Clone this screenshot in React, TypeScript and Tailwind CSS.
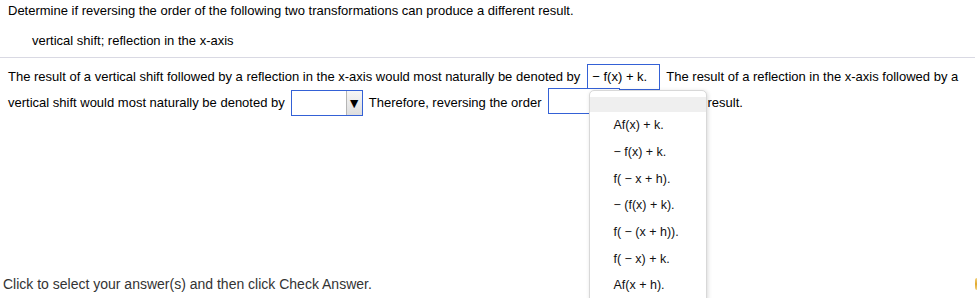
import React from 'react';

const choices = [
  'Af(x) + k.',
  '\u2212 f(x) + k.',
  'f( \u2212 x + h).',
  '\u2212 (f(x) + k).',
  'f( \u2212 (x + h)).',
  'f( \u2212 x) + k.',
  'Af(x + h).',
];

const AnswerBox: React.FC<{ children?: React.ReactNode; className?: string }> = ({ children, className }) => (
  <span className={`inline-flex h-[26px] items-center border border-[#3461d6] bg-white ${className ?? ''}`}>
    {children}
  </span>
);

const App: React.FC = () => {
  return (
    <div className="relative flex h-[298px] w-[977px] flex-col overflow-hidden bg-white font-['Liberation_Sans',Arial,sans-serif] text-[13px] leading-[16px] text-black">
      <div className="pl-2 pt-[3px]">
        Determine if reversing the order of the following two transformations can produce a different result.
      </div>
      <div className="pl-8 pt-[14px]">vertical shift; reflection in the x-axis</div>
      <div className="mt-[8px] h-px w-[975px] bg-[#d9d9e3]" />

      {/* question sentence with dropdown answers */}
      <div className="pl-2 pt-[6px]">
        <div className="flex h-[26px] items-center whitespace-nowrap">
          <span>The result of a vertical shift followed by a reflection in the x-axis would most naturally be denoted by</span>
          <AnswerBox className="ml-[7px] w-[73px] pl-[4px]">{'\u2212 f(x) + k.'}</AnswerBox>
          <span className="ml-[6px]">The result of a reflection in the x-axis followed by a</span>
        </div>
        <div className="flex h-[26px] items-center whitespace-nowrap">
          <span>vertical shift would most naturally be denoted by</span>
          <AnswerBox className="ml-[6px] w-[72px] justify-end">
            <span className="flex h-full w-[16px] items-center justify-center border-l border-[#b5b5b5] bg-gradient-to-b from-[#f6f6f6] to-[#dedede] text-[14px] leading-none">
              ▼
            </span>
          </AnswerBox>
          <span className="ml-[6px]">Therefore, reversing the order</span>
          <span className="relative ml-[7px]">
            <AnswerBox className="w-[72px]" />
            <div className="absolute left-[41px] top-[2px] z-10 h-[230px] w-[118px] rounded-[5px] border border-[#d8d8d8] bg-white pt-[6px] shadow-[1px_1px_4px_rgba(0,0,0,0.15)]">
              <div className="h-[15px] bg-[#efefef]" />
              {choices.map((c, i) => (
                <div key={i} className="flex h-[26.67px] items-center pl-[23px] text-[12.5px] text-[#111]">
                  {c}
                </div>
              ))}
            </div>
          </span>
          <span className="ml-[87px]">result.</span>
        </div>
      </div>

      <div className="mt-auto flex items-center justify-between pb-[6px] pl-[3px]">
        <span className="text-[14px] text-[#333]">Click to select your answer(s) and then click Check Answer.</span>
        <span className="h-[12px] w-[2px] rounded-l-full bg-gradient-to-b from-[#f3d27a] via-[#e0a92c] to-[#f3d27a]" />
      </div>
    </div>
  );
};

export default App;
